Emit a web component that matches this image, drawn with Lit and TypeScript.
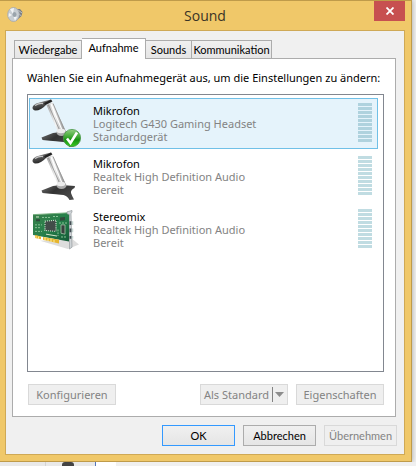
import { LitElement, html, svg, css } from "lit";
import { customElement, property, state } from "lit/decorators.js";
import { classMap } from "lit/directives/class-map.js";

interface Device {
  name: string;
  model: string;
  status: string;
  kind: "mic" | "card";
  isDefault?: boolean;
}

const DEVICES: Device[] = [
  { name: "Mikrofon", model: "Logitech G430 Gaming Headset", status: "Standardgerät", kind: "mic", isDefault: true },
  { name: "Mikrofon", model: "Realtek High Definition Audio", status: "Bereit", kind: "mic" },
  { name: "Stereomix", model: "Realtek High Definition Audio", status: "Bereit", kind: "card" },
];

const TABS = ["Wiedergabe", "Aufnahme", "Sounds", "Kommunikation"];

@customElement("device-icon")
export class DeviceIcon extends LitElement {
  @property() kind = "mic";
  @property({ type: Boolean }) checked = false;

  static styles = css`
    :host { display: block; width: 48px; height: 48px; }
    svg { display: block; }
  `;

  private mic() {
    return svg`
      <defs>
        <linearGradient id="stem" x1="0" y1="0.5" x2="1" y2="0.3">
          <stop offset="0" stop-color="#8b8b8b"/><stop offset="0.4" stop-color="#f4f4f4"/><stop offset="1" stop-color="#777"/>
        </linearGradient>
        <linearGradient id="head" x1="0" y1="0" x2="0.4" y2="1">
          <stop offset="0" stop-color="#a8a8a8"/><stop offset="0.5" stop-color="#555"/><stop offset="1" stop-color="#222"/>
        </linearGradient>
        <linearGradient id="foot" x1="0" y1="0" x2="1" y2="0.6">
          <stop offset="0" stop-color="#707070"/><stop offset="0.45" stop-color="#333"/><stop offset="1" stop-color="#4a4a4a"/>
        </linearGradient>
      </defs>
      <path d="M10.500 38.500 L22 34 L30 33 L44 34 L43.500 36 Q39.500 38 40 41 Q41 44 43 47.500 L38.500 48 Q36.500 44 32.500 43 Q28 42.500 11.500 41Z" fill="url(#foot)"/>
      <path d="M15.500 6 L21.500 3 L34.500 31.500 L27 33Z" fill="url(#stem)"/>
      <path d="M17.500 6 L28.500 31" stroke="#8a8a8a" stroke-width="0.8"/>
      <path d="M22 4.500 L33.500 31" stroke="#999" stroke-width="1"/>
      <path d="M20 5 L31 31" stroke="#fff" stroke-width="1.200"/>
      <ellipse cx="30.500" cy="33.500" rx="5" ry="3.500" fill="#aaa"/>
      <ellipse cx="30" cy="32" rx="4.200" ry="2.200" fill="#ececec"/>
      <path d="M1.500 8.500 Q2 5.500 7 4 L14 2 L20 0.500 L21.500 2.500 L15.500 5.500 Q10 11.500 4.500 11.500 Q1.500 11 1.500 8.500Z" fill="url(#head)"/>
      <path d="M4 6.500 Q8 4 12 4.500" stroke="#c8c8c8" stroke-width="1.300" fill="none"/>
      <path d="M13.500 5 L20.500 1.500" stroke="#222" stroke-width="2"/>
    `;
  }

  private card() {
    return svg`
      <defs>
        <linearGradient id="board" x1="0" y1="0" x2="1" y2="1">
          <stop offset="0" stop-color="#3b7f4c"/><stop offset="0.5" stop-color="#26804a"/><stop offset="1" stop-color="#135a37"/>
        </linearGradient>
      </defs>
      <g transform="translate(1 5) scale(1 0.930)">
        <path d="M8 33 L36 42 L47 37 L40 31Z" fill="#ddd"/>
        <path d="M1 5 L37 3 L37 34 L1 27Z" fill="url(#board)"/>
        <path d="M1 5 L37 3" stroke="#75ae7d" stroke-width="1"/>
        <path d="M3 27 L3 30 L9 31.500 L9 28.500Z M11 29 L11 32 L27 36 L27 32Z" fill="#e6b52e"/>
        <path d="M4 28 V30 M6.500 28.500 V31 M13 29.500 V33 M16 30.500 V33.500 M19 31 V34.500 M22 32 V35" stroke="#fff0a0" stroke-width="1"/>
        <path d="M13 12 L24 11 L24 23 L13 22Z" fill="#424c49" stroke="#c9dfcb" stroke-width="1.200" stroke-dasharray="1 1"/>
        <path d="M29 16 L33 16 L33 26 L29 25Z" fill="#37413c" stroke="#a9c8ad" stroke-width="0.800"/>
        <path d="M28 8 L33 7.500 L33 11 L28 11.500Z M4 10 L8 10 L8 12 L4 12Z" fill="#31493c"/>
        <path d="M3 16 H10 M3 19 H9 M3 23 H10 M10 8 H18 M21 7 H26 M27 14 H35 M26 21 V28 M29 29 H35" stroke="#8fc89c" stroke-width="1" stroke-dasharray="2 1"/>
        <path d="M4 7.500 H7 M14 26 L25 28" stroke="#dce8ce" stroke-width="1"/>
        <path d="M35 2 L40 0.500 L40 2.500 L39 3.500 L40 40 L37.500 42 L37.500 5 L35 4Z" fill="#d0d5d8" stroke="#868c90" stroke-width="0.600"/>
        <path d="M38.500 12 V16 M38.500 20 V24 M38.500 28 V31" stroke="#424d53" stroke-width="2"/>
        <path d="M40.500 12 V16 M40.500 20 V24 M40.500 28 V31" stroke="#c6d7d3" stroke-width="1.500"/>
      </g>
    `;
  }

  private tick() {
    return svg`
      <defs>
        <linearGradient id="ok" x1="0" y1="0" x2="0" y2="1">
          <stop offset="0" stop-color="#93cf82"/><stop offset="0.45" stop-color="#3aa62f"/><stop offset="0.6" stop-color="#179011"/><stop offset="1" stop-color="#39cc22"/>
        </linearGradient>
      </defs>
      <circle cx="41" cy="39" r="8.600" fill="url(#ok)" stroke="#4a9848" stroke-width="0.800"/>
      <path d="M36 39.500 L39.500 44 L46 33.500" fill="none" stroke="#fff" stroke-width="2.600"/>
    `;
  }

  render() {
    return html`<svg width="50" height="48" viewBox="0 0 50 48" aria-hidden="true">
      ${this.kind === "mic" ? this.mic() : this.card()} ${this.checked ? this.tick() : null}
    </svg>`;
  }
}

@customElement("level-meter")
export class LevelMeter extends LitElement {
  static styles = css`
    :host { display: grid; gap: 1px; width: 14px; }
    .bar { height: 3px; background: #c0dce2; }
    :host([dim]) .bar { background: #afd2de; }
  `;

  render() {
    return Array.from({ length: 10 }, () => html`<div class="bar"></div>`);
  }
}

@customElement("app-root")
export class AppRoot extends LitElement {
  @state() private tab = 1;
  @state() private selected = 0;

  static styles = css`
    :host {
      display: block;
      overflow: hidden;
      background: #f0f0f0;
      color: #000;
      font: 11px/13px "Noto Sans", "Open Sans", sans-serif;
    }
    * { box-sizing: border-box; }
    button { font: inherit; color: inherit; margin: 0; padding: 0; white-space: nowrap; }
    .window {
      margin-right: 4px;
      padding: 0 6px 6px 5px;
      background: #f0c869;
      border: 1px solid #bf9b4a;
      border-left: 0;
      box-shadow: 0 0 5px #00000055;
    }
    .titlebar {
      display: grid;
      grid-template-columns: 31px 1fr 31px;
      align-items: start;
      height: 29px;
    }
    .app-icon { display: block; margin: 5px 0 0 2px; }
    .title {
      margin: 0;
      padding-top: 4px;
      text-align: center;
      font: 14px/21px "Open Sans", "Noto Sans", sans-serif;
      color: #3a3426;
    }
    .close {
      display: grid;
      place-items: center;
      height: 20px;
      border: 0;
      background: #c75050;
    }
    .client {
      padding: 7px 8px 8px 6px;
      background: #f0f0f0;
      border: 1px solid #cfa956;
    }
    .tabs {
      display: grid;
      grid-template-columns: 68px 64px 46px 80px;
      align-items: end;
      padding-left: 2px;
    }
    .tab {
      height: 18px;
      border: 1px solid #acacac;
      border-bottom: 0;
      border-left-width: 0;
      background: linear-gradient(#f0f0f0, #e5e5e5);
      font: 11px/13px Lato, "Noto Sans", sans-serif;
    }
    .tab:first-child { border-left-width: 1px; }
    .tab.active {
      height: 21px;
      padding-bottom: 4px;
      margin-bottom: -1px;
      background: #fff;
      position: relative;
    }
    .panel { padding: 11px 11px 11px 14px; background: #fff; border: 1px solid #acacac; }
    .prompt { margin: 0 0 8px; line-height: 16px; white-space: nowrap; }
    .list {
      display: grid;
      align-content: start;
      gap: 2px;
      min-height: 278px;
      margin: 0;
      padding: 3px 5px 3px 1px;
      list-style: none;
      border: 1px solid #828790;
    }
    .device {
      display: grid;
      grid-template-columns: 48px 1fr 14px;
      column-gap: 14px;
      padding: 0 5px 0 1px;
      height: 51px;
      border: 1px solid transparent;
    }
    .device.selected { background: #e5f3fb; border-color: #70c0e7; }
    .info { padding-top: 5px; color: #838383; white-space: nowrap; }
    .name { color: #000; }
    .device level-meter { align-self: start; margin-top: 4px; }
    .row { display: flex; gap: 8px; }
    .actions { margin: 12px 0 0 1px; }
    .spacer { flex: 1; }
    .btn {
      width: 88px;
      height: 21px;
      border: 1px solid #acacac;
      background: linear-gradient(#f0f0f0, #e5e5e5);
    }
    .btn:disabled { color: #838383; background: #efefef; border-color: #d9d9d9; }
    .split { display: flex; align-items: center; justify-content: space-between; padding: 0 1px 0 3px; }
    .arrow { display: block; }
    .footer { justify-content: flex-end; margin-top: 8px; margin-right: -1px; }
    .footer .btn { width: 73px; font: 11px/13px Lato, "Noto Sans", sans-serif; }
    .footer .primary { border-color: #3399ff; }
    .behind { display: flex; height: 4px; background: #f0f0f0; }
    .behind-left { display: flex; width: 96px; border-right: 1px solid #5577bb; background: #e9e9e9; }
    .behind-cell { width: 46px; border-right: 1px solid #d4d4d4; }
    .behind-mark { width: 12px; height: 4px; margin-left: 16px; border-radius: 3px 3px 0 0; background: #444; }
    .behind-page { width: 20px; background: #fff; }
  `;

  render() {
    return html`
      <main class="window">
        <header class="titlebar">
          <svg class="app-icon" width="16" height="17" viewBox="0 0 16 17" aria-hidden="true">
            <path d="M8 3 L13 3 L15.500 6 L14.500 10 L9 15Z" fill="#777b80"/>
            <path d="M11 4 L15 7 M11 7 L14.500 10" stroke="#c4c8cb" stroke-width="1"/>
            <ellipse cx="6.500" cy="8.500" rx="5.800" ry="7" fill="#c8ced3" stroke="#a3a8ae" stroke-width="0.800"/>
            <path d="M6 8 L3 3 L7 2Z M6 9 L10 11 L8 15Z M5 9 L1.500 11 L2 7Z" fill="#f1f4f6"/>
            <ellipse cx="7.500" cy="8.500" rx="2" ry="2.500" fill="#9aa4ac"/>
          </svg>
          <h1 class="title">Sound</h1>
          <button class="close" aria-label="Schließen">
            <svg width="8" height="8" viewBox="0 0 8 8" aria-hidden="true">
              <path d="M0.500 0.500 L7.500 7.500 M7.500 0.500 L0.500 7.500" stroke="#fff" stroke-width="1.800"/>
            </svg>
          </button>
        </header>
        <div class="client">
          <div class="tabs" role="tablist">
            ${TABS.map(
              (label, i) => html`<button
                class=${classMap({ tab: true, active: i === this.tab })}
                role="tab"
                aria-selected=${i === this.tab}
                @click=${() => (this.tab = i)}
              >${label}</button>`
            )}
          </div>
          <section class="panel" role="tabpanel">
            <p class="prompt" id="prompt">Wählen Sie ein Aufnahmegerät aus, um die Einstellungen zu ändern:</p>
            <ul class="list" role="listbox" aria-labelledby="prompt">
              ${DEVICES.map(
                (d, i) => html`<li
                  class=${classMap({ device: true, selected: i === this.selected })}
                  role="option"
                  aria-selected=${i === this.selected}
                  @click=${() => (this.selected = i)}
                >
                  <device-icon .kind=${d.kind} ?checked=${d.isDefault ?? false}></device-icon>
                  <div class="info">
                    <div class="name">${d.name}</div>
                    <div>${d.model}</div>
                    <div>${d.status}</div>
                  </div>
                  <level-meter ?dim=${i === this.selected}></level-meter>
                </li>`
              )}
            </ul>
            <div class="row actions">
              <button class="btn" disabled>Konfigurieren</button>
              <span class="spacer"></span>
              <button class="btn split" disabled>
                <span>Als Standard</span>
                <svg class="arrow" width="14" height="15" viewBox="0 0 14 15" aria-hidden="true">
                  <path d="M0.500 0 V15" stroke="#838383"/>
                  <path d="M3 5 H12 L7.500 10Z" fill="#8c8c8c"/>
                </svg>
              </button>
              <button class="btn" disabled>Eigenschaften</button>
            </div>
          </section>
          <div class="row footer">
            <button class="btn primary">OK</button>
            <button class="btn">Abbrechen</button>
            <button class="btn" disabled>Übernehmen</button>
          </div>
        </div>
      </main>
      <div class="behind" aria-hidden="true">
        <div class="behind-left">
          <div class="behind-cell"></div>
          <div class="behind-mark"></div>
        </div>
        <div class="behind-page"></div>
      </div>
    `;
  }
}
